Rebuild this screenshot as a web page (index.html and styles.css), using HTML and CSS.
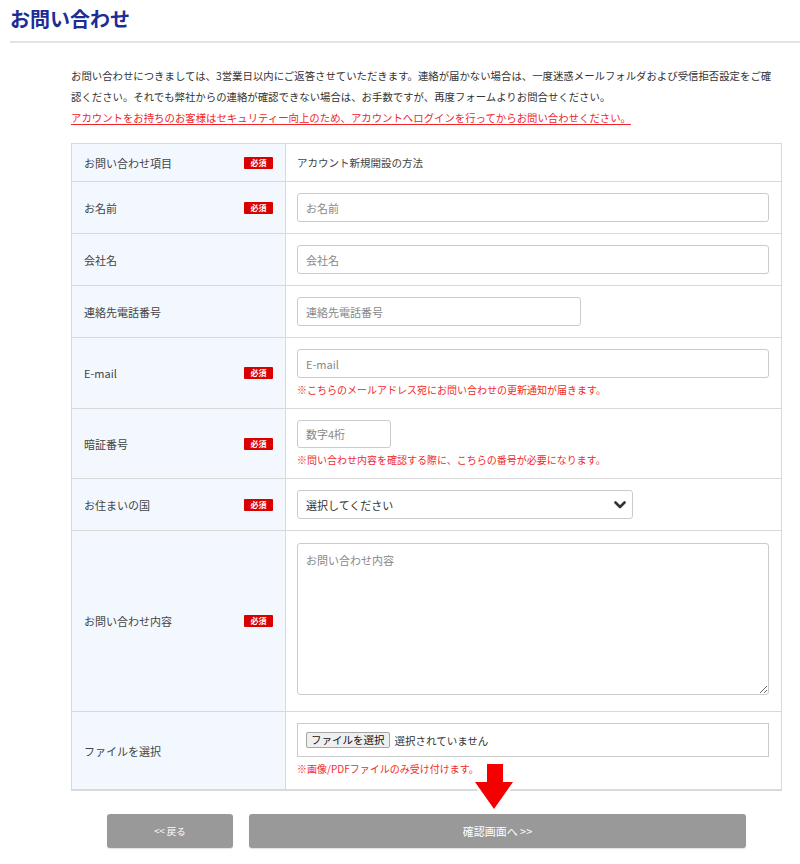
FILE: index.html
```html
<!DOCTYPE html>
<html lang="ja">
<head>
<meta charset="utf-8">
<title>お問い合わせ</title>
<link rel="stylesheet" href="styles.css">
</head>
<body>
<header class="page-head">
  <h1 class="page-title">お問い合わせ</h1>
  <div class="title-rule"></div>
</header>

<main class="content">
  <p class="intro">お問い合わせにつきましては、3営業日以内にご返答させていただきます。連絡が届かない場合は、一度迷惑メールフォルダおよび受信拒否設定をご確認ください。それでも弊社からの連絡が確認できない場合は、お手数ですが、再度フォームよりお問合せください。<br><a class="intro-alert" href="#">アカウントをお持ちのお客様はセキュリティー向上のため、アカウントへログインを行ってからお問い合わせください。</a></p>

  <form class="contact-form" action="#">
    <table class="form-table">
      <colgroup><col class="col-label"><col class="col-field"></colgroup>
      <tr class="row-text">
        <th><div class="label"><span>お問い合わせ項目</span><span class="req">必須</span></div></th>
        <td class="plain">アカウント新規開設の方法</td>
      </tr>
      <tr>
        <th><div class="label"><span>お名前</span><span class="req">必須</span></div></th>
        <td><input class="input" type="text" placeholder="お名前"></td>
      </tr>
      <tr>
        <th><div class="label"><span>会社名</span></div></th>
        <td><input class="input" type="text" placeholder="会社名"></td>
      </tr>
      <tr>
        <th><div class="label"><span>連絡先電話番号</span></div></th>
        <td><input class="input input-tel" type="tel" placeholder="連絡先電話番号"></td>
      </tr>
      <tr>
        <th><div class="label"><span>E-mail</span><span class="req">必須</span></div></th>
        <td>
          <input class="input" type="email" placeholder="E-mail">
          <p class="note">※こちらのメールアドレス宛にお問い合わせの更新通知が届きます。</p>
        </td>
      </tr>
      <tr>
        <th><div class="label"><span>暗証番号</span><span class="req">必須</span></div></th>
        <td>
          <input class="input input-pin" type="text" placeholder="数字4桁">
          <p class="note">※問い合わせ内容を確認する際に、こちらの番号が必要になります。</p>
        </td>
      </tr>
      <tr>
        <th><div class="label"><span>お住まいの国</span><span class="req">必須</span></div></th>
        <td>
          <div class="select-wrap">
            <select class="select">
              <option>選択してください</option>
            </select>
            <svg class="select-caret" width="12" height="8" viewBox="0 0 12 8" aria-hidden="true"><path d="M1.5 1.5 6 6l4.5-4.5" fill="none" stroke="#333" stroke-width="2.6" stroke-linecap="round" stroke-linejoin="round"/></svg>
          </div>
        </td>
      </tr>
      <tr>
        <th><div class="label"><span>お問い合わせ内容</span><span class="req">必須</span></div></th>
        <td><textarea class="textarea" placeholder="お問い合わせ内容"></textarea></td>
      </tr>
      <tr>
        <th><div class="label"><span>ファイルを選択</span></div></th>
        <td class="file-cell">
          <label class="file-box">
            <input class="file-input" type="file" accept="image/*,application/pdf">
            <span class="file-btn">ファイルを選択</span>
            <span class="file-name">選択されていません</span>
          </label>
          <p class="note">※画像/PDFファイルのみ受け付けます。</p>
        </td>
      </tr>
    </table>

    <div class="actions">
      <button class="btn btn-back" type="button">&lt;&lt;&nbsp;戻る</button>
      <button class="btn btn-next" type="submit">確認画面へ&nbsp;&gt;&gt;</button>
      <svg class="pointer-arrow" width="50" height="60" viewBox="0 0 50 60" aria-hidden="true">
        <path d="M17 6h16v18h10L24 51 5 24h12z" fill="#f50000" stroke="#fff" stroke-width="5" stroke-linejoin="round" paint-order="stroke"/>
      </svg>
    </div>
  </form>
</main>
</body>
</html>
```

FILE: styles.css
```css
* {
  box-sizing: border-box;
}

body {
  margin: 0;
  background: #fff;
  color: #333;
  font-family: "Noto Sans CJK JP", "Noto Sans", sans-serif;
}

/* Page heading */
.page-head {
  padding-top: 5px;
}

.page-title {
  margin: 0;
  padding: 0 10px;
  height: 36px;
  font-size: 20px;
  line-height: 28px;
  font-weight: 700;
  color: #1c2d94;
}

.title-rule {
  height: 2px;
  margin-left: 10px;
  background: #e4e4e4;
}

/* Main column */
.content {
  width: 711px;
  margin: 22px 0 40px 71px;
}

.intro {
  max-width: 706px;
  margin: 0 0 15px;
  font-size: 10.4px;
  line-height: 21px;
  color: #333;
}

.intro-alert {
  color: #f0262b;
  text-decoration: underline;
  text-underline-offset: 2px;
}

/* Form table */
.form-table {
  width: 711px;
  border-collapse: collapse;
  table-layout: fixed;
  border: 1px solid #d9d9d9;
  border-bottom-width: 2px;
}

.col-label {
  width: 214px;
}

.form-table th,
.form-table td {
  border: 1px solid #d9d9d9;
  vertical-align: middle;
}

.form-table th {
  background: #f3f8ff;
  padding: 0 12px;
  text-align: left;
  font-weight: 400;
}

.form-table td {
  padding: 11px 12px 11px 11px;
  background: #fff;
}

.form-table td.plain {
  height: 38px;
  padding: 0 11px;
  font-size: 10.5px;
  color: #444;
}

.form-table td.file-cell {
  padding-bottom: 13px;
}

.label {
  display: flex;
  justify-content: space-between;
  align-items: center;
  font-size: 11px;
  color: #444;
}

.req {
  display: inline-flex;
  align-items: center;
  justify-content: center;
  width: 29px;
  height: 12px;
  border-radius: 1px;
  background: #d90000;
  color: #fff;
  font-size: 8px;
  font-weight: 700;
  line-height: 1;
}

/* Controls */
.input,
.select,
.textarea {
  display: block;
  width: 100%;
  height: 29px;
  padding: 0 8px;
  border: 1px solid #cbcbcb;
  border-radius: 3px;
  background: #fff;
  color: #333;
  font-family: inherit;
  font-size: 11px;
}

.input::placeholder,
.textarea::placeholder {
  color: #888;
}

.input-tel {
  width: 284px;
}

.input-pin {
  width: 94px;
  height: 28px;
}

.select-wrap {
  position: relative;
  width: 336px;
}

.select {
  appearance: none;
  -webkit-appearance: none;
  color: #333;
}

.select-caret {
  position: absolute;
  right: 7px;
  top: 11px;
  pointer-events: none;
}

.textarea {
  height: 152px;
  margin-top: 1px;
  margin-bottom: 5px;
  padding: 8px;
  resize: vertical;
}

.note {
  margin: 5px 0 0;
  font-size: 10px;
  line-height: 14px;
  color: #ef2b2b;
}

.file-box {
  display: flex;
  align-items: center;
  gap: 5px;
  height: 34px;
  padding: 0 8px;
  border: 1px solid #cbcbcb;
  cursor: pointer;
}

.file-input {
  display: none;
}

.file-btn {
  display: inline-block;
  height: 16px;
  padding: 0 4px;
  border: 1px solid #a5a5a5;
  border-radius: 2px;
  background: #efefef;
  color: #111;
  font-size: 10.5px;
  line-height: 14px;
}

.file-name {
  font-size: 10.5px;
  color: #333;
}

/* Buttons */
.actions {
  position: relative;
  display: flex;
  gap: 16px;
  margin-top: 23px;
  padding-left: 36px;
}

.btn {
  height: 34px;
  border: 0;
  border-radius: 3px;
  background: #999;
  color: #fff;
  font-family: inherit;
  font-size: 10px;
  cursor: pointer;
  box-shadow: 0 1px 1px rgba(0, 0, 0, 0.12);
}

.btn-back {
  width: 126px;
  font-size: 9.5px;
}

.btn-next {
  width: 497px;
  font-size: 11px;
}

.pointer-arrow {
  position: absolute;
  left: 399px;
  top: -56px;
}
```
